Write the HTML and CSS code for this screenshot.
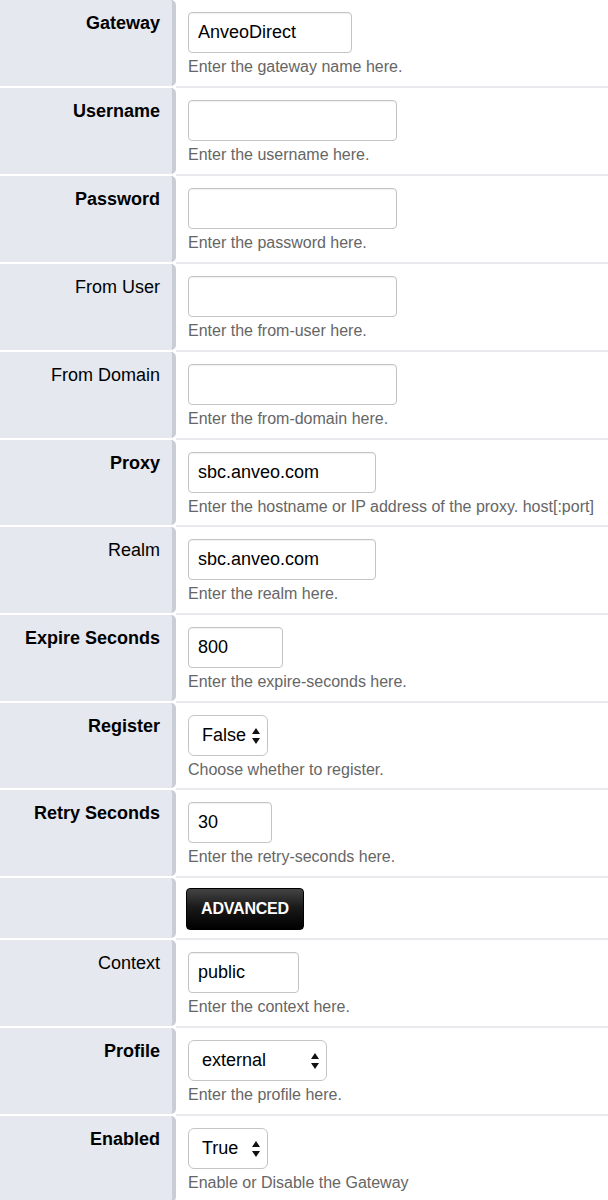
FILE: index.html
```html
<!DOCTYPE html>
<html>
<head>
<meta charset="utf-8">
<link rel="stylesheet" href="styles.css">
</head>
<body>
<div class="form">
  <div class="row">
    <div class="label req">Gateway</div>
    <div class="field">
      <input class="text w164" type="text" value="AnveoDirect">
      <div class="hint">Enter the gateway name here.</div>
    </div>
  </div>
  <div class="row">
    <div class="label req">Username</div>
    <div class="field">
      <input class="text w209" type="text" value="">
      <div class="hint">Enter the username here.</div>
    </div>
  </div>
  <div class="row">
    <div class="label req">Password</div>
    <div class="field">
      <input class="text w209" type="text" value="">
      <div class="hint">Enter the password here.</div>
    </div>
  </div>
  <div class="row">
    <div class="label">From User</div>
    <div class="field">
      <input class="text w209" type="text" value="">
      <div class="hint">Enter the from-user here.</div>
    </div>
  </div>
  <div class="row">
    <div class="label">From Domain</div>
    <div class="field">
      <input class="text w209" type="text" value="">
      <div class="hint">Enter the from-domain here.</div>
    </div>
  </div>
  <div class="row">
    <div class="label req">Proxy</div>
    <div class="field short">
      <input class="text w188" type="text" value="sbc.anveo.com">
      <div class="hint">Enter the hostname or IP address of the proxy. host[:port]</div>
    </div>
  </div>
  <div class="row">
    <div class="label">Realm</div>
    <div class="field">
      <input class="text w188" type="text" value="sbc.anveo.com">
      <div class="hint">Enter the realm here.</div>
    </div>
  </div>
  <div class="row">
    <div class="label req">Expire Seconds</div>
    <div class="field">
      <input class="text w95" type="text" value="800">
      <div class="hint">Enter the expire-seconds here.</div>
    </div>
  </div>
  <div class="row">
    <div class="label req">Register</div>
    <div class="field short">
      <div class="select w80"><span>False</span><svg class="arrows" width="8" height="16" viewBox="0 0 8 16"><polygon points="0,6 4,0 8,6" /><polygon points="0,10 8,10 4,16" /></svg></div>
      <div class="hint">Choose whether to register.</div>
    </div>
  </div>
  <div class="row">
    <div class="label req">Retry Seconds</div>
    <div class="field">
      <input class="text w84" type="text" value="30">
      <div class="hint">Enter the retry-seconds here.</div>
    </div>
  </div>
  <div class="row">
    <div class="label"></div>
    <div class="field adv">
      <button class="btn" type="button">ADVANCED</button>
    </div>
  </div>
  <div class="row">
    <div class="label">Context</div>
    <div class="field">
      <input class="text w111" type="text" value="public">
      <div class="hint">Enter the context here.</div>
    </div>
  </div>
  <div class="row">
    <div class="label req">Profile</div>
    <div class="field">
      <div class="select w139"><span>external</span><svg class="arrows" width="8" height="16" viewBox="0 0 8 16"><polygon points="0,6 4,0 8,6" /><polygon points="0,10 8,10 4,16" /></svg></div>
      <div class="hint">Enter the profile here.</div>
    </div>
  </div>
  <div class="row">
    <div class="label req">Enabled</div>
    <div class="field">
      <div class="select w80"><span>True</span><svg class="arrows" width="8" height="16" viewBox="0 0 8 16"><polygon points="0,6 4,0 8,6" /><polygon points="0,10 8,10 4,16" /></svg></div>
      <div class="hint">Enable or Disable the Gateway</div>
    </div>
  </div>
</div>
</body>
</html>
```

FILE: styles.css
```css
html, body {
  margin: 0;
  padding: 0;
  background: #ffffff;
}

body {
  font-family: "Liberation Sans", Arial, sans-serif;
  color: #000;
}

.form {
  display: flex;
  flex-direction: column;
  width: 608px;
}

.row {
  display: grid;
  grid-template-columns: 176px 1fr;
}

.label {
  box-sizing: border-box;
  background: #e5e8ef;
  border-right: 4px solid #c9cdd5;
  border-radius: 0 5px 5px 0;
  margin-bottom: 2px;
  padding: 13px 12px 0 0;
  text-align: right;
  font-size: 18px;
  line-height: 20px;
  color: #000;
}

.label.req {
  font-weight: bold;
}

.field {
  box-sizing: border-box;
  padding: 12px 0 10px 12px;
  border-bottom: 2px solid #e8eaee;
  display: flex;
  flex-direction: column;
  align-items: flex-start;
}

.field.short {
  padding-bottom: 9px;
}

.field.adv {
  padding: 10px 0 8px 10px;
}

.text {
  box-sizing: border-box;
  height: 41px;
  margin: 0;
  padding: 0 9px;
  border: 1px solid #c4c4c4;
  border-radius: 4px;
  background: #fff;
  box-shadow: inset 0 1px 1px rgba(0, 0, 0, 0.06);
  font-family: "Liberation Sans", Arial, sans-serif;
  font-size: 18px;
  color: #000;
  outline: none;
}

.select {
  box-sizing: border-box;
  height: 41px;
  padding: 0 7px 0 13px;
  border: 1px solid #c4c4c4;
  border-radius: 6px;
  background: #fff;
  display: flex;
  align-items: center;
  justify-content: space-between;
  font-size: 18px;
  color: #000;
}

.arrows {
  display: block;
  fill: #111;
}

.w80 { width: 80px; }
.w84 { width: 84px; }
.w95 { width: 95px; }
.w111 { width: 111px; }
.w139 { width: 139px; }
.w164 { width: 164px; }
.w188 { width: 188px; }
.w209 { width: 209px; }

.hint {
  margin-top: 5px;
  font-size: 16px;
  line-height: 18px;
  color: #666;
  white-space: nowrap;
}

.btn {
  box-sizing: border-box;
  width: 118px;
  height: 42px;
  margin: 0;
  padding: 0;
  border: 1px solid #000;
  border-radius: 4px;
  background: linear-gradient(to bottom, #444 0%, #1a1a1a 45%, #000 100%);
  color: #fff;
  font-family: "Liberation Sans", Arial, sans-serif;
  font-weight: bold;
  font-size: 16px;
  letter-spacing: -0.2px;
}
```
